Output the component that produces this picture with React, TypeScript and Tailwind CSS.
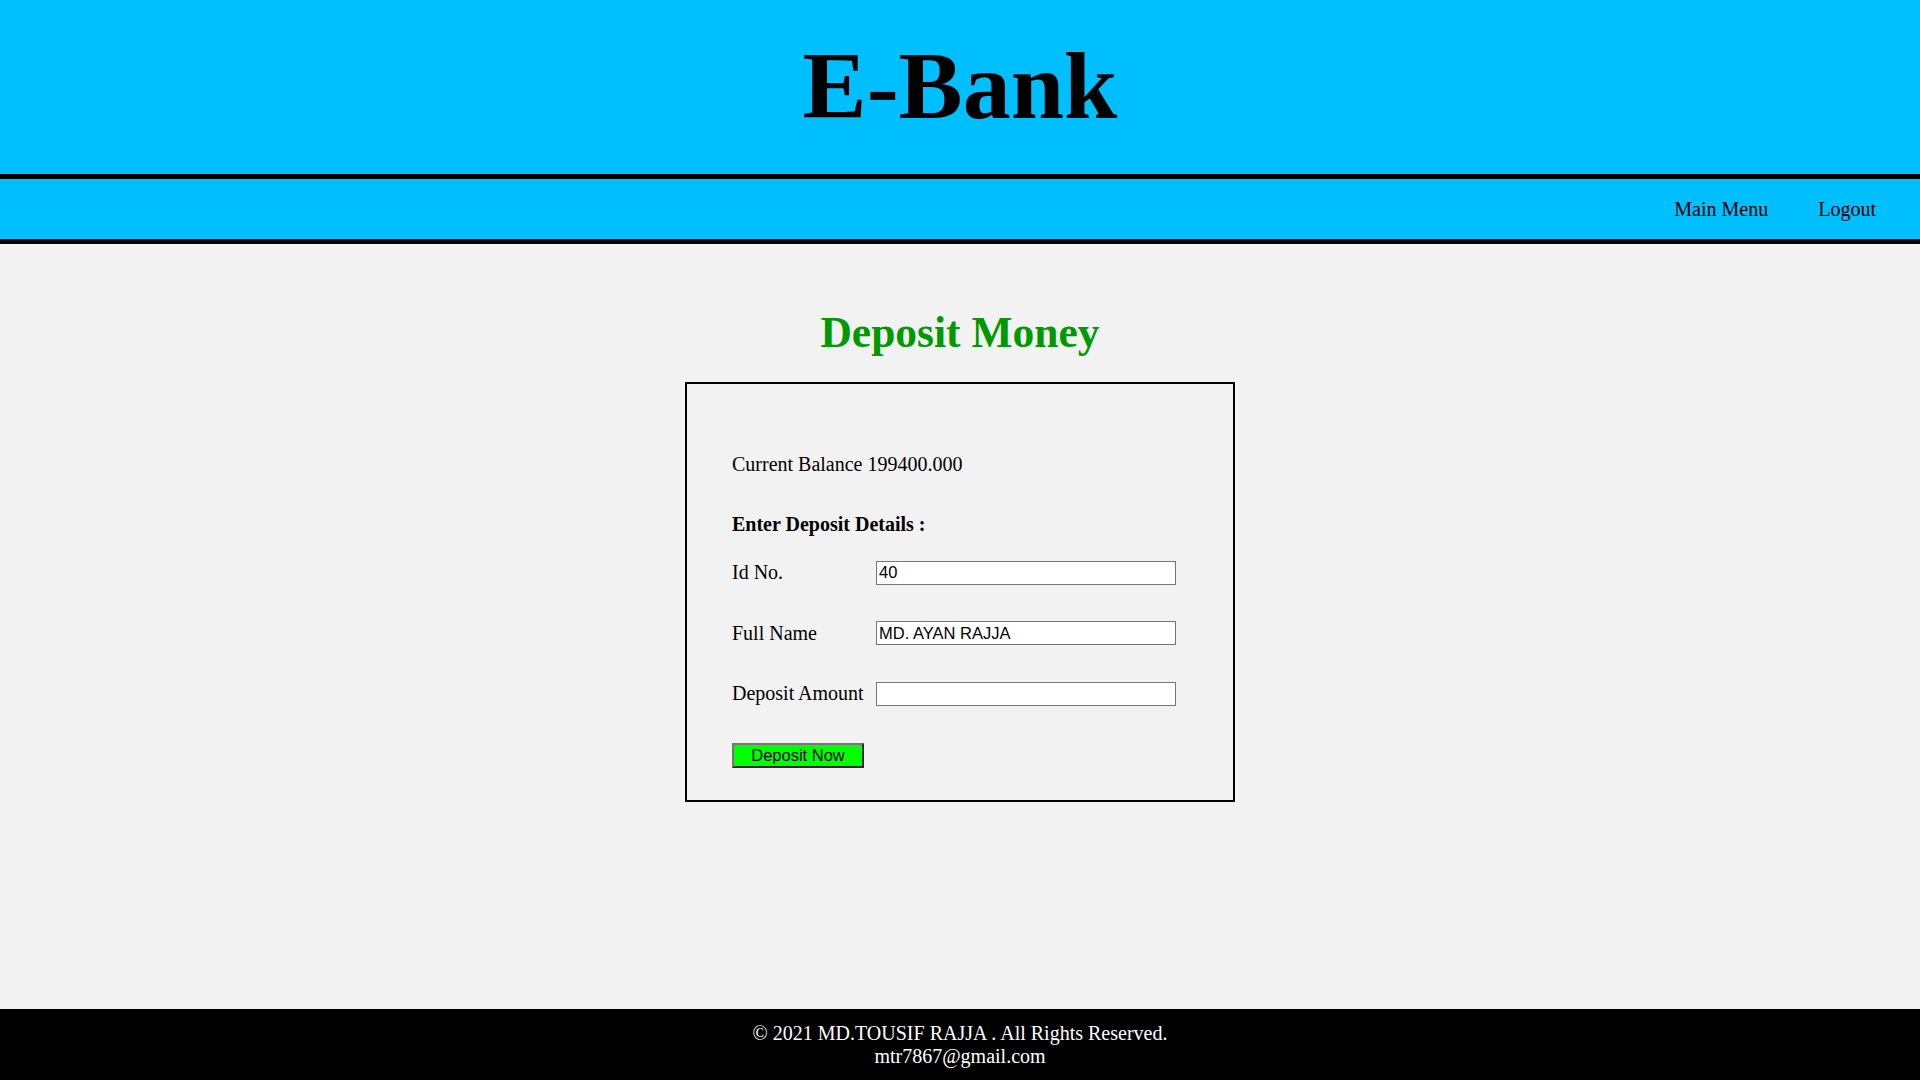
export default function App() {
  return (
    <div className="min-h-screen flex flex-col bg-[#f2f2f2] font-['Liberation_Serif','Times_New_Roman',serif] text-black">
      {/* Header */}
      <header className="h-[179px] bg-[#00bfff] border-b-[5px] border-black pt-[33px]">
        <h1 className="text-center text-[96px] font-bold leading-[106px]">E-Bank</h1>
      </header>

      {/* Nav */}
      <nav className="h-[65px] bg-[#00bfff] border-b-[5px] border-black flex items-center justify-end gap-[50px] pr-[44px] text-[20px]">
        <a href="#" className="text-black">Main Menu</a>
        <a href="#" className="text-black">Logout</a>
      </nav>

      <main className="flex-1 flex flex-col items-center">
        <h2 className="mt-[64px] text-[43.5px] font-bold leading-[49px] text-[#009900]">Deposit Money</h2>

        <div className="mt-[25px] w-[550px] h-[420px] border-2 border-black px-[45px] pt-[69px] text-[20px] leading-[22px]">
          <p>Current Balance 199400.000</p>
          <p className="mt-[38px] font-bold">Enter Deposit Details :</p>

          <div className="mt-[25px] flex flex-col gap-[36px]">
            <div className="flex items-baseline">
              <label className="w-[144px] shrink-0 relative top-[1px]">Id No.</label>
              <input
                type="text"
                defaultValue="40"
                className="w-[300px] h-[24px] bg-white border border-[#767676] px-[2px] font-['Liberation_Sans',Arial,sans-serif] text-[16.5px] outline-none"
              />
            </div>
            <div className="flex items-baseline">
              <label className="w-[144px] shrink-0 relative top-[1px]">Full Name</label>
              <input
                type="text"
                defaultValue="MD. AYAN RAJJA"
                className="w-[300px] h-[24px] bg-white border border-[#767676] px-[2px] font-['Liberation_Sans',Arial,sans-serif] text-[16.5px] outline-none"
              />
            </div>
            <div className="flex items-baseline">
              <label className="w-[144px] shrink-0 relative top-[1px]">Deposit Amount</label>
              <input
                type="text"
                className="w-[300px] h-[24px] bg-white border border-[#767676] px-[2px] font-['Liberation_Sans',Arial,sans-serif] text-[16.5px] outline-none"
              />
            </div>
          </div>

          <button className="mt-[37px] w-[132px] h-[25px] bg-[#00ff00] border-2 border-t-[#767676] border-l-[#767676] border-b-[#2b2b2b] border-r-[#2b2b2b] font-['Liberation_Sans',Arial,sans-serif] text-[16.5px] leading-[20px] text-black">
            Deposit Now
          </button>
        </div>
      </main>

      {/* Footer */}
      <footer className="h-[71px] bg-black text-white text-center text-[20px] leading-[23px] pt-[13px]">
        <p>© 2021 MD.TOUSIF RAJJA . All Rights Reserved.</p>
        <p>mtr7867@gmail.com</p>
      </footer>
    </div>
  );
}
